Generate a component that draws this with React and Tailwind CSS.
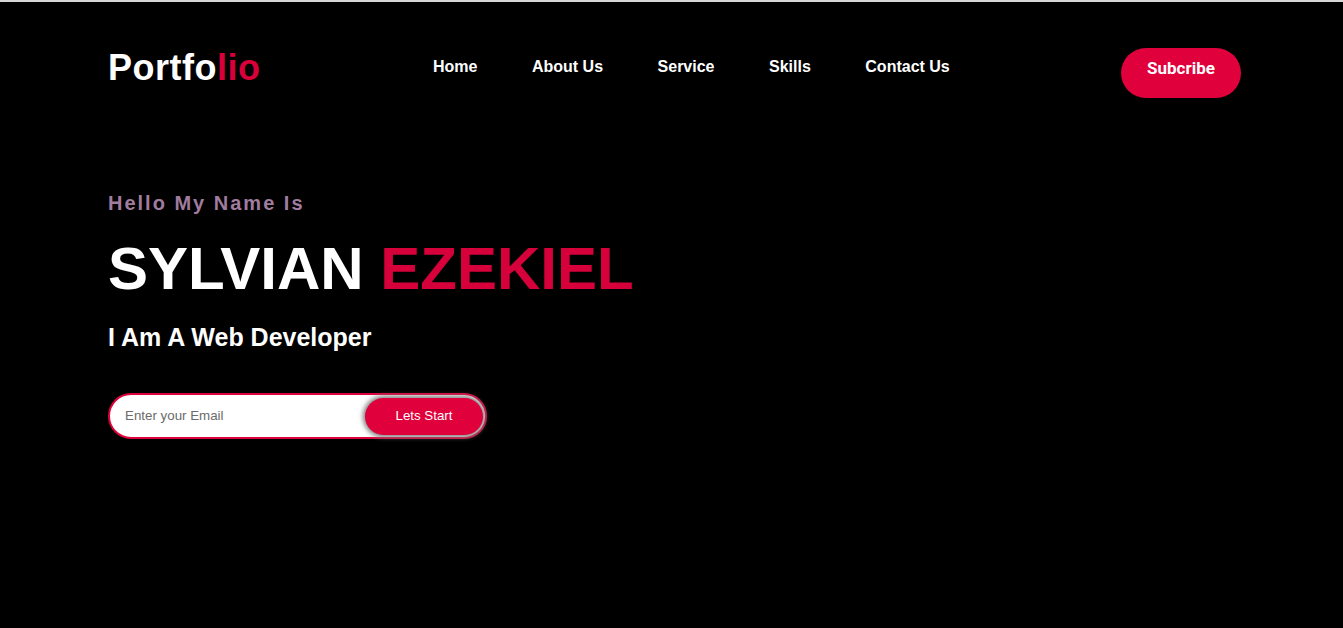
export default function App() {
  return (
    <div
      className="min-h-[628px] w-full bg-black border-t-2 border-[#d6d6d6]"
      style={{ fontFamily: '"Liberation Sans", Arial, sans-serif' }}
    >
      <header className="flex items-start pt-[46px] pl-[108px] pr-[102px]">
        <div className="w-[325px] mt-[2px] text-[36px] leading-[36px] font-bold tracking-[0.5px] text-white">
          Portfo<span className="text-[#d9003a]">lio</span>
        </div>
        <nav className="flex gap-[54.5px] mt-[11px] text-[16px] leading-[16px] font-bold text-white">
          <a>Home</a>
          <a>About Us</a>
          <a>Service</a>
          <a>Skills</a>
          <a>Contact Us</a>
        </nav>
        <button
          className="ml-auto h-[50px] w-[120px] rounded-full bg-[#e0003c] text-white text-[17px] font-bold leading-[20px] pt-[10px] pb-[20px]"
          style={{ fontFamily: 'Roboto, "Liberation Sans", sans-serif' }}
        >
          Subcribe
        </button>
      </header>

      <section className="pl-[108px] mt-[95px]">
        <p className="text-[20px] leading-[20px] font-bold tracking-[2px] text-[#a07c9f]">
          Hello My Name Is
        </p>
        <h1 className="mt-[26px] text-[60px] leading-[60px] font-bold text-white">
          SYLVIAN <span className="text-[#d6003a]">EZEKIEL</span>
        </h1>
        <h2 className="mt-[26px] text-[25px] leading-[25px] font-bold text-white">
          I Am A Web Developer
        </h2>
        <div className="mt-[43px] flex items-center w-[379px] h-[46px] rounded-full border-2 border-[#e0003c] bg-white">
          <input
            className="flex-1 min-w-0 pl-[15px] bg-transparent outline-none text-[13.33px] text-[#444] placeholder:text-[#6b6b6b]"
            placeholder="Enter your Email"
          />
          <button className="mr-[2px] h-[37px] w-[118px] rounded-full bg-[#e0003c] text-white text-[13.33px] shadow-[0_0_5px_2px_#7a7a7a]">
            Lets Start
          </button>
        </div>
      </section>
    </div>
  );
}
